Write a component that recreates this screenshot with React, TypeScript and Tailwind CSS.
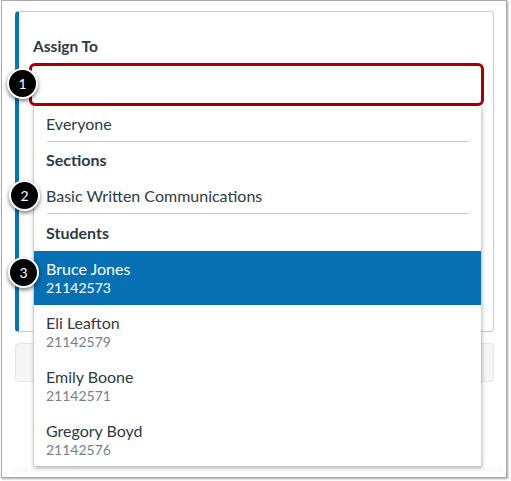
import React from "react";

const Badge = ({ n, cls }: { n: string; cls: string }) => (
  <div
    className={`absolute w-[31px] h-[31px] rounded-full bg-black border-2 border-white shadow-[0_2px_4px_rgba(0,0,0,0.55)] flex items-center justify-center text-white text-[14px] leading-none ${cls}`}
  >
    {n}
  </div>
);

const students = [
  { name: "Bruce Jones", id: "21142573", active: true },
  { name: "Eli Leafton", id: "21142579" },
  { name: "Emily Boone", id: "21142571" },
  { name: "Gregory Boyd", id: "21142576" },
];

export default function App() {
  return (
    <div
      className="relative w-[511px] h-[481px] bg-white overflow-hidden text-[#2d3b45]"
      style={{ fontFamily: "Lato, 'Open Sans', sans-serif" }}
    >
      <div className="ml-[1px] w-[506px] h-[478px] border border-[#a9a9a9] shadow-[1px_1px_2px_rgba(0,0,0,0.35)] bg-white pl-[13px] pt-[10px]">
        {/* card */}
        <div className="w-[479px] h-[321px] border border-[#c7cdd1] border-l-[4px] border-l-[#0374b5] rounded-[4px] pt-[24px] pl-[10px]">
          <div className="pl-[4px] text-[15.5px] font-bold leading-[20px]">Assign To</div>
          <div className="mt-[7px] w-[455px] h-[43px] border-[3px] border-[#a30000] rounded-[6px]" />
        </div>
        {/* button below */}
        <div className="mt-[11px] w-[479px] h-[39px] bg-[#f5f5f5] border border-[#e6e6e6] rounded-[4px]" />
        <div className="mt-[84px] -ml-[4px] w-[492px] h-[8px] bg-[#fbfbfb]" />
      </div>

      {/* dropdown */}
      <div className="absolute left-[33px] top-[106px] w-[448px] h-[360px] bg-white border-l border-[#c7cdd1] shadow-[1px_2px_4px_rgba(0,0,0,0.3)] text-[16px]">
        <div className="h-[35px] flex items-center pl-[12px]">Everyone</div>
        <div className="ml-[13px] mr-[12px] h-px bg-[#c7cdd1]" />
        <div className="h-[36px] flex items-center pl-[12px] font-bold">Sections</div>
        <div className="h-[35px] flex items-center pl-[12px]">Basic Written Communications</div>
        <div className="ml-[13px] mr-[12px] h-px bg-[#c7cdd1]" />
        <div className="h-[37px] flex items-center pl-[12px] font-bold">Students</div>
        {students.map((s) => (
          <div
            key={s.id}
            className={`h-[54px] pl-[12px] pt-[8px] ${s.active ? "bg-[#0770b3] text-white" : ""}`}
          >
            <div className="text-[16px] leading-[19px]">{s.name}</div>
            <div className={`text-[14px] leading-[19px] ${s.active ? "text-white" : "text-[#73818c]"}`}>{s.id}</div>
          </div>
        ))}
      </div>

      <Badge n="1" cls="left-[7px] top-[68px]" />
      <Badge n="2" cls="left-[9px] top-[180px]" />
      <Badge n="3" cls="left-[8px] top-[257px]" />
    </div>
  );
}
